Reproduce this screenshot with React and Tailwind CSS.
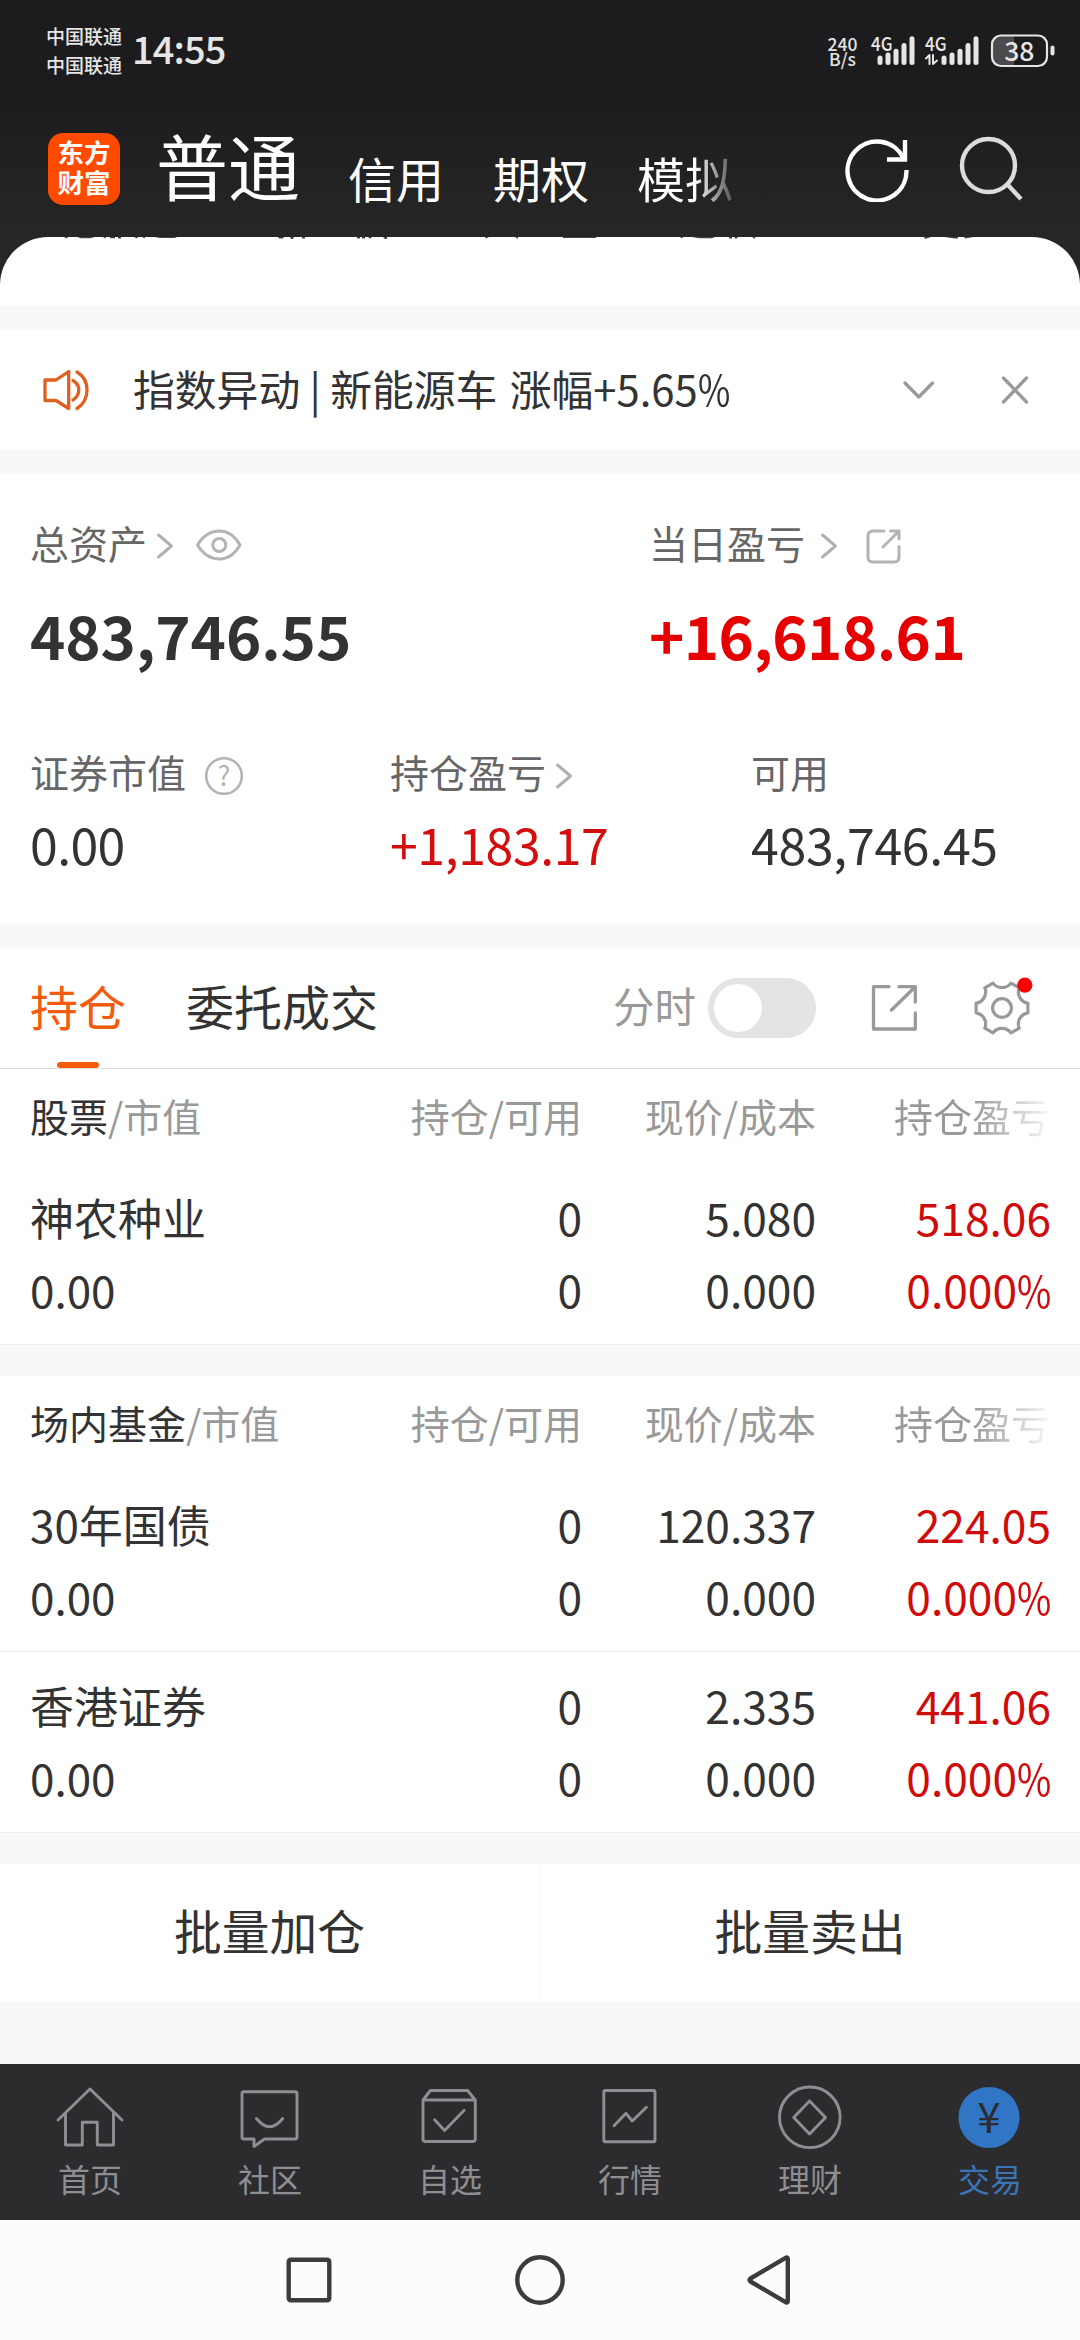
import React from "react";

const S = { fill: "none", stroke: "currentColor", strokeLinecap: "round", strokeLinejoin: "round" };

function Signal({ data }) {
  return (
    <svg width="54" height="36" viewBox="0 0 54 36" className="overflow-visible text-[#e6e6e6]">
      <text x="0" y="17.5" fontSize="19" fontWeight="500" textLength="21.5" lengthAdjust="spacingAndGlyphs" fill="currentColor">4G</text>
      {data && (
        <path {...S} strokeWidth="2" d="M1 25.5 L4.5 22 V31 M8 22 V31 L12 27.5" />
      )}
      <g fill="currentColor" transform={data ? "translate(16.5 0)" : "translate(6.5 0)"}>
        <rect x="0" y="22.5" width="5" height="9.5" rx="2.5" />
        <rect x="8" y="19.5" width="5" height="12.5" rx="2.5" />
        <rect x="16" y="15.8" width="5" height="16.2" rx="2.5" />
        <rect x="24" y="10" width="5" height="22" rx="2.5" />
        <rect x="32" y="3.3" width="5" height="28.7" rx="2.5" />
      </g>
    </svg>
  );
}

function StatusBar() {
  return (
    <div className="flex h-[97px] items-start pl-[46px] text-[#e6e6e6]">
      <div className="mt-[21px] w-[77px] text-[19px] leading-[29px] font-medium">
        <div>中国联通</div>
        <div>中国联通</div>
      </div>
      <div className="mt-[28px] ml-[9px] text-[38px] leading-[40px] font-medium tracking-[-0.9px]">14:55</div>
      <div className="mt-[36px] ml-auto w-[31px] text-center text-[17.5px] leading-[15px] font-medium">
        <div>240</div>
        <div>B/s</div>
      </div>
      <div className="mt-[33px] ml-[13px] flex">
        <Signal />
        <Signal data />
      </div>
      <svg className="mt-[33px] mr-[24px] ml-[11px] overflow-visible" width="66" height="36" viewBox="0 0 66 36">
        <path d="M10 2.5 H24 V32.5 H10 Q2 32.5 2 24.5 V10.5 Q2 2.5 10 2.5Z" fill="#4b4b4d" />
        <rect x="2" y="2.5" width="55" height="30.5" rx="9" fill="none" stroke="#e6e6e6" strokeWidth="2.2" />
        <rect x="60.5" y="12.5" width="4" height="10" rx="2" fill="#e6e6e6" />
        <text x="29.3" y="27.5" textAnchor="middle" fontSize="26.5" fontWeight="500" fill="#e6e6e6">38</text>
      </svg>
    </div>
  );
}

function Header() {
  return (
    <div className="flex h-[140px] items-center pl-[48px] text-white">
      <div className="mt-1 flex h-[72px] w-[72px] flex-col items-center justify-center rounded-[15px] bg-[#ff4a00] pb-1 text-[26.5px] leading-[30px] font-bold">
        <div>东方</div>
        <div>财富</div>
      </div>
      <div className="mb-[7px] ml-[36px] w-[144px] text-[72px] leading-[80px]">普通</div>
      <div className="mt-[19px] ml-[48px] flex text-[48px] leading-[60px]">
        <div className="w-[145px]">信用</div>
        <div className="w-[144px]">期权</div>
        <div className="w-[96px] bg-linear-to-r from-white from-60% to-[#555] bg-clip-text text-transparent">模拟</div>
      </div>
      <svg className="ml-[109px]" width="70" height="70" viewBox="0 0 70 70" fill="none" stroke="#fff" strokeWidth="4.4">
        <path d="M64.5 38 A29.5 29.5 0 1 1 61.5 26" />
        <path d="M63 8 V27.5 H45" />
      </svg>
      <svg className="ml-[41px]" width="72" height="72" viewBox="0 0 72 72" fill="none" stroke="#dcdcdc" strokeWidth="4.4">
        <circle cx="35.500" cy="34.5" r="26.5" />
        <path d="M54 53 L68 68" />
      </svg>
    </div>
  );
}

function Chevron({ className }) {
  return (
    <svg className={className} width="18" height="28" viewBox="0 0 18 28">
      <path {...S} strokeWidth="3" className="text-[#b0b0b0]" d="M2.5 3 L15.5 14 L2.5 25" />
    </svg>
  );
}

function Notice() {
  return (
    <div className="flex h-[120px] items-center bg-white pl-[40px]">
      <svg width="52" height="46" viewBox="0 0 52 46" className="text-[#e2601f]">
        <path {...S} strokeWidth="3.3" d="M5 13 H16 L28.7 4.5 V41.5 L16 33.5 H5 Z" />
        <path {...S} strokeWidth="3.3" d="M33 13.5 Q38.8 17 38.8 23 Q38.8 29 33 33" />
        <path {...S} strokeWidth="3.3" d="M37 5 Q47 11 47 23 Q47 35 37 41.5" />
      </svg>
      <div className="mb-[5px] ml-[41px] w-[620px] text-[41.8px] leading-[60px] whitespace-nowrap text-[#333]">
        指数异动 | 新能源车 <span className="ml-[3px]">涨幅+5.65</span><Percent className="w-[33px]" />
      </div>
      <svg className="ml-[148px] text-[#999]" width="36" height="30" viewBox="0 0 36 30">
        <path {...S} strokeWidth="3.3" d="M4 8 L17.8 22 L31.5 8" />
      </svg>
      <svg className="ml-[62px] text-[#999]" width="32" height="32" viewBox="0 0 32 32">
        <path {...S} strokeWidth="3.3" d="M4.5 4 L27.5 28 M27.5 4 L4.5 28" />
      </svg>
    </div>
  );
}

function Percent({ className }) {
  return (
    <span className={`inline-block text-left ${className}`}>
      <span className="inline-block origin-left scale-x-[0.84]">%</span>
    </span>
  );
}

function Assets() {
  return (
    <div className="h-[450px] bg-white pt-[38px] text-[#333]">
      <div className="flex pl-[30px]">
        <div className="w-[619px]">
          <div className="flex h-[60px] items-center text-[39px] leading-[60px] text-[#666]">
            总资产
            <Chevron className="mt-[8px] ml-[9px]" />
            <svg className="mt-[5px] ml-[21px] text-[#b4b4b4]" width="48" height="34" viewBox="0 0 48 34">
              <path {...S} strokeWidth="3" d="M2.5 17 Q11 3 24.5 3 Q37 3 45 17 Q37 31 24.5 31 Q11 31 2.5 17Z" />
              <circle cx="24.3" cy="17" r="6.5" {...S} strokeWidth="3" />
            </svg>
          </div>
          <div className="mt-[22px] text-[60px] leading-[80px] font-bold tracking-[-0.1px]">483,746.55</div>
        </div>
        <div>
          <div className="flex h-[60px] items-center text-[39px] leading-[60px] text-[#666]">
            当日盈亏
            <Chevron className="mt-[8px] ml-[15px]" />
            <svg className="mt-[8px] ml-[26px] text-[#b4b4b4]" width="38" height="38" viewBox="0 0 38 38">
              <path {...S} strokeWidth="3" d="M20 4 H9 Q4 4 4 9 V30 Q4 35 9 35 H30 Q35 35 35 30 V19.5 M26.5 4 H35 V12 M35 4 L19 20" />
            </svg>
          </div>
          <div className="mt-[22px] text-[60px] leading-[80px] font-bold tracking-[-0.6px] text-[#e60000]">+16,618.61</div>
        </div>
      </div>
      <div className="mt-[67px] grid grid-cols-3 text-[39px] leading-[60px]">
        <div className="pl-[30px]">
          <div className="flex h-[60px] items-center text-[#666]">
            证券市值
            <svg className="mt-[9px] ml-[18px] text-[#b4b4b4]" width="40" height="40" viewBox="0 0 40 40">
              <circle cx="20" cy="20" r="17.8" {...S} strokeWidth="2.6" />
              <text x="20" y="30" textAnchor="middle" fontSize="27" fill="currentColor">?</text>
            </svg>
          </div>
          <div className="mt-[12px] text-[50px] tracking-[-0.6px]">0.00</div>
        </div>
        <div className="pl-[30px]">
          <div className="flex h-[60px] items-center text-[#666]">
            持仓盈亏
            <Chevron className="mt-[9px] ml-[9px]" />
          </div>
          <div className="mt-[12px] text-[50px] tracking-[-0.4px] text-[#d40d0d]">+1,183.17</div>
        </div>
        <div className="pl-[31px]">
          <div className="h-[60px] text-[#666]">可用</div>
          <div className="mt-[12px] text-[50px] tracking-[-0.3px]">483,746.45</div>
        </div>
      </div>
    </div>
  );
}

function Tabs() {
  return (
    <div className="flex h-[121px] border-b border-[#dedede] bg-white pl-[30px] text-[#333]">
      <div className="flex w-[96px] flex-col items-center text-[48px] text-[#f55b0c]">
        <div className="h-[114px] leading-[114px]">持仓</div>
        <div className="h-[6px] w-[42px] rounded-[3px] bg-[#f55b0c]" />
      </div>
      <div className="ml-[60px] w-[192px] text-[48px] leading-[114px]">委托成交</div>
      <div className="ml-[235px] text-[41.5px] leading-[114px] text-[#999]">分时</div>
      <div className="mt-[30px] ml-[12px] h-[60px] w-[108px] rounded-full bg-[#e4e4e7] p-[6px]">
        <div className="h-[48px] w-[48px] rounded-full bg-white" />
      </div>
      <svg className="mt-[35px] ml-[53px] text-[#999]" width="50" height="50" viewBox="0 0 50 50">
        <path {...S} strokeWidth="3.3" d="M20 3.7 H4.5 V46 H46.3 V30 M30 3.7 H46.3 V19 M46 4 L22.5 27" />
      </svg>
      <svg className="mt-[28px] ml-[53px] text-[#999]" width="64" height="64" viewBox="-30 -32 64 64">
        <path {...S} strokeWidth="3.2" d="M25.9 -4.8 V4.8 A11.3 11.3 0 0 0 17.2 20.2 L9 24.9 A11.3 11.3 0 0 0 -9 24.9 L-17.2 20.2 A11.3 11.3 0 0 0 -25.9 4.8 V-4.8 A11.3 11.3 0 0 0 -17.2 -20.2 L-9 -24.9 A11.3 11.3 0 0 0 9 -24.9 L17.2 -20.2 A11.3 11.3 0 0 0 25.9 -4.8Z" />
        <circle r="9.4" {...S} strokeWidth="3.2" />
        <circle cx="22.8" cy="-22.8" r="7.6" fill="#f00" />
      </svg>
    </div>
  );
}

function TableHead({ name }) {
  return (
    <div className="mb-[3px] flex h-[92px] pl-[30px] text-[39px] leading-[92px] whitespace-nowrap text-[#999]">
      <div className="w-[300px]"><span className="text-[#333]">{name}</span>/市值</div>
      <div className="w-[252px] text-right">持仓/可用</div>
      <div className="w-[234px] text-right">现价/成本</div>
      <div className="ml-[78px] w-[156px] bg-linear-to-r from-[#999] from-50% to-[#f8f8f8] bg-clip-text text-transparent">持仓盈亏</div>
    </div>
  );
}

function Holding({ name, price, profit }) {
  return (
    <div className="h-[181px] border-b border-[#ebecee] pt-[17px] text-[44.3px] leading-[72px] text-[#333]">
      <div className="flex pl-[30px]">
        <div className="w-[300px] text-[44px]">{name}</div>
        <div className="w-[252px] text-right">0</div>
        <div className="w-[234px] text-right">{price}</div>
        <div className="w-[235px] text-right text-[#cf0c0c]">{profit}</div>
      </div>
      <div className="flex pl-[30px]">
        <div className="w-[300px] text-[44px]">0.00</div>
        <div className="w-[252px] text-right">0</div>
        <div className="w-[234px] text-right">0.000</div>
        <div className="w-[235px] text-right text-[#cf0c0c]">0.000<Percent className="w-[34px]" /></div>
      </div>
    </div>
  );
}

const ICONS = {
  首页: <path d="M4 39 L36 8 L68 39 M11.5 32 V64 H28.3 V41.3 H43.3 V64 H59.5 V32" />,
  社区: <path d="M10 10.7 H61 Q63 10.7 63 12.7 V56 Q63 58 61 58 H30.5 L20 65.5 V58 H10 Q8 58 8 56 V12.7 Q8 10.7 10 10.7Z M22.5 37.5 Q35.6 54 48.7 37.5" />,
  自选: <path d="M9 19 L16.4 9.5 H53.6 L61.3 19 M9 19 H61.3 V58 Q61.3 60.5 58.8 60.5 H11.5 Q9 60.5 9 58Z M20.6 38.7 L30.6 49.5 L50.2 29.3" />,
  行情: <path d="M11.4 9.5 H59.5 Q61 9.5 61 11 V59 Q61 60.8 59.5 60.8 H11.4 Q9.8 60.8 9.8 59 V11 Q9.8 9.5 11.4 9.5Z M20 44.7 L32 32.3 L38.3 40 L52.4 26.3" />,
  理财: <g><circle cx="35.8" cy="36.3" r="30.3" /><path d="M35.6 20 L51.5 36.5 L35.6 53 L19.7 36.5Z" /></g>,
};

function BottomNav() {
  return (
    <div className="grid h-[156px] grid-cols-6 bg-[#2c2c2e] text-[32px] leading-[44px] text-[#8e8e93]">
      {["首页", "社区", "自选", "行情", "理财"].map((n) => (
        <div key={n} className="flex flex-col items-center pt-[17px]">
          <svg {...S} strokeWidth="2.9" width="72" height="72" viewBox="0 0 72 72">{ICONS[n]}</svg>
          <div className="mt-[3px]">{n}</div>
        </div>
      ))}
      <div className="flex flex-col items-center pt-[17px] text-[#3b75b8]">
        <svg width="72" height="72" viewBox="0 0 72 72">
          <circle cx="35" cy="36.5" r="30.6" fill="#3176c4" />
          <text x="35" y="52" textAnchor="middle" fontSize="42" fill="#2c2c2e">¥</text>
        </svg>
        <div className="mt-[3px]">交易</div>
      </div>
    </div>
  );
}

function SystemNav() {
  return (
    <div className="flex h-[120px] items-center justify-center gap-[171px] bg-[#fcfcfc] text-[#3c3c3c]">
      <svg {...S} strokeWidth="4.4" width="60" height="60" viewBox="0 0 60 60"><rect x="9.7" y="9.7" width="40.6" height="40.6" rx="2" /></svg>
      <svg {...S} strokeWidth="4.4" width="60" height="60" viewBox="0 0 60 60"><circle cx="30" cy="30" r="22.7" /></svg>
      <svg {...S} strokeWidth="4.4" width="60" height="60" viewBox="0 0 60 60"><path d="M9.5 28.5 L45 7.6 Q46.8 7 46.8 9 V51 Q46.8 53 45 52.4 L9.5 31.5 Q7.5 30 9.5 28.5Z" /></svg>
    </div>
  );
}

export default function App() {
  return (
    <div className="h-[2340px] w-[1080px] overflow-hidden bg-[#f7f8fa] font-['Noto_Sans_CJK_SC',sans-serif]">
      <div className="bg-linear-to-b from-[#1c1c1e] from-30% to-[#262626] to-75%">
        <StatusBar />
        <Header />
        <div className="h-[69px] rounded-t-[48px] bg-white">
          <svg width="1080" height="3" viewBox="0 0 1080 3" fill="#444">
            <path d="M64 0h4l-1 1.500zM77 0h18l-5 1.200h-9zM103 0h3l-1 1.500zM110 0h5v1.200h-5zM118 0h3v1.500h-3zM134 0h4l-1 1.500zM143 0h2v1h-2zM154 0h23l-2 1h-15zM278 0h6l-1 1.500h-4zM290 0h4l-1 2h-2zM302 0h3v1.500h-3zM357 0h3v1.500h-3zM362 0h3v1.500h-3zM368 0h4l-2 1.800zM383 0h4v2h-2zM485 0h4l-3 1.500zM515 0h3v2zM563 0h33v1h-33zM680 0h3l-1 1.500zM692 0h23l-3 1.200h-13zM729 0h3v1.500h-3zM734 0h4l-2 2zM752 0h3v2zM924 0h7l-6 2zM945 0h13v1.500h-4zM964 0h10l-9 1.500z" />
          </svg>
        </div>
      </div>
      <div className="h-[24px] bg-[#f8f8fb]" />
      <Notice />
      <div className="h-[24px] bg-[#f8f8fb]" />
      <Assets />
      <div className="h-[24px] bg-[#f8f8fb]" />
      <Tabs />
      <div className="bg-white">
        <TableHead name="股票" />
        <Holding name="神农种业" price="5.080" profit="518.06" />
      </div>
      <div className="mt-[31px] bg-white">
        <TableHead name="场内基金" />
        <Holding name="30年国债" price="120.337" profit="224.05" />
        <Holding name="香港证券" price="2.335" profit="441.06" />
      </div>
      <div className="mt-[31px] mb-[62px] grid h-[138px] grid-cols-2 bg-white text-center text-[47.8px] leading-[132px] text-[#333]">
        <div className="border-r border-[#f5f5f5]">批量加仓</div>
        <div>批量卖出</div>
      </div>
      <BottomNav />
      <SystemNav />
    </div>
  );
}
